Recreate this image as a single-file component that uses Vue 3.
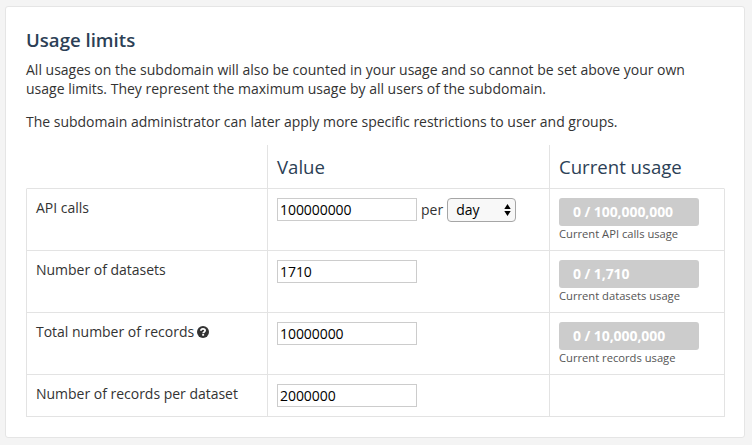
<script setup>
import { ref } from 'vue'

const rows = ref([
  { label: 'API calls', value: '100000000', per: true, usage: '0 / 100,000,000', caption: 'Current API calls usage' },
  { label: 'Number of datasets', value: '1710', usage: '0 / 1,710', caption: 'Current datasets usage' },
  { label: 'Total number of records', help: true, value: '10000000', usage: '0 / 10,000,000', caption: 'Current records usage' },
  { label: 'Number of records per dataset', value: '2000000' }
])
const period = ref('day')
</script>

<template>
  <main class="page">
    <section class="card">
      <h2 class="title">Usage limits</h2>
      <p class="text">All usages on the subdomain will also be counted in your usage and so cannot be set above your own usage limits. They represent the maximum usage by all users of the subdomain.</p>
      <p class="text last">The subdomain administrator can later apply more specific restrictions to user and groups.</p>
      <div class="table">
        <div class="row head">
          <div class="cell"></div>
          <div class="cell">Value</div>
          <div class="cell">Current usage</div>
        </div>
        <div v-for="row in rows" :key="row.label" class="row" :class="{ short: !row.usage }">
          <div class="cell label">
            <span>{{ row.label }}</span>
            <svg v-if="row.help" class="help" viewBox="0 0 12 12">
              <circle cx="6" cy="6" r="6" fill="#333" />
              <path d="M3.9 4.8C4 3.5 4.8 2.9 6 2.9c1.3 0 2.1.7 2.1 1.7 0 1.3-1.9 1.3-1.9 2.6" fill="none" stroke="#fff" stroke-width="1.8" />
              <rect x="5.2" y="8" width="1.9" height="1.7" fill="#fff" />
            </svg>
          </div>
          <div class="cell value">
            <input v-model="row.value" class="input" type="text" />
            <template v-if="row.per">
              <span class="per">per</span>
              <span class="select">
                <span>{{ period }}</span>
                <svg class="arrows" viewBox="0 0 7 12">
                  <path d="M3.5 0L6.7 5H.3zM3.5 12L.3 7h6.4z" fill="#000" />
                </svg>
              </span>
            </template>
          </div>
          <div class="cell">
            <template v-if="row.usage">
              <div class="bar">{{ row.usage }}</div>
              <div class="caption">{{ row.caption }}</div>
            </template>
          </div>
        </div>
      </div>
    </section>
  </main>
</template>

<style>
body {
  background: #f4f4f4;
}
</style>

<style scoped>
.page {
  box-sizing: border-box;
  height: 445px;
  padding: 6px 7px 7px 5px;
  background: #f4f4f4;
  font-family: "Open Sans", sans-serif;
  font-size: 14px;
  line-height: 19px;
  color: #333;
}
.card {
  box-sizing: border-box;
  height: 432px;
  padding: 20px;
  background: #fff;
  border: 1px solid #e5e5e5;
  border-radius: 3px;
}
.title {
  margin: 0 0 7px;
  font-size: 18.6px;
  line-height: 26px;
  font-weight: 600;
  color: #2c3f56;
}
.text {
  margin: 0 0 14px;
}
.text.last {
  letter-spacing: -0.008px;
}
.table {
  width: 699px;
}
.row {
  box-sizing: border-box;
  display: grid;
  grid-template-columns: 242px 282px 175px;
  grid-template-rows: 100%;
  height: 62px;
}
.row.short {
  height: 42px;
}
.cell {
  box-sizing: border-box;
  padding: 9px 9px 0;
  border-right: 1px solid #e3e3e3;
  border-bottom: 1px solid #e3e3e3;
}
.cell:first-child {
  border-left: 1px solid #e3e3e3;
}
.head {
  height: 44px;
  font-size: 18.6px;
  line-height: 26px;
  color: #2c3f56;
}
.head .cell:first-child {
  border-left-color: transparent;
}
.head .cell:last-child {
  border-right-color: transparent;
}
.label {
  display: flex;
  align-items: flex-start;
  letter-spacing: -0.015px;
}
.help {
  width: 12px;
  height: 12px;
  margin: 4px 0 0 3.2px;
}
.value {
  display: flex;
  align-items: flex-start;
}
.input {
  box-sizing: border-box;
  width: 140px;
  height: 23px;
  margin: 0;
  padding: 1px 2px;
  border: 1px solid #ccc;
  border-radius: 0;
  background: #fff;
  font: inherit;
  letter-spacing: -0.06px;
  color: #000;
  outline: none;
}
.per {
  margin: 2px 4px 0;
}
.select {
  box-sizing: border-box;
  display: flex;
  align-items: center;
  justify-content: space-between;
  width: 69px;
  height: 24px;
  padding: 0 4px 1px 8px;
  border: 1px solid #a6a6a6;
  border-radius: 4px;
  background: #f8f8f8;
  color: #000;
}
.arrows {
  width: 7px;
  height: 12px;
  margin-top: 1px;
}
.bar {
  box-sizing: border-box;
  width: 140px;
  height: 28px;
  padding: 0 14px;
  border-radius: 3px;
  background: #ccc;
  line-height: 28px;
  font-weight: 700;
  letter-spacing: -0.07px;
  color: #fff;
}
.caption {
  font-size: 11.2px;
  line-height: 16px;
  color: #555;
}
</style>
